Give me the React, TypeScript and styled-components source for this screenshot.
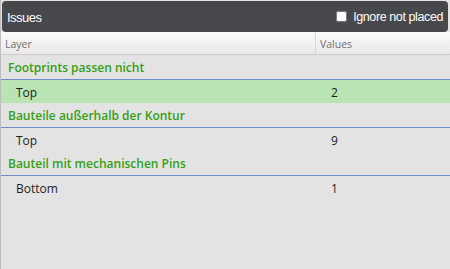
import React, { useState } from "react";
import styled, { createGlobalStyle } from "styled-components";

const GlobalStyle = createGlobalStyle`
  html, body {
    margin: 0;
    padding: 0;
    background: #e3e3e3;
  }
  #root {
    height: 269px;
  }
`;

const Panel = styled.div`
  height: 269px;
  box-sizing: border-box;
  background: #e3e3e3;
  border-left: 1px solid #bdbdbd;
  padding-top: 1px;
  display: flex;
  flex-direction: column;
`;

const TitleBar = styled.div`
  height: 31px;
  margin: 0 2px 0 1px;
  padding: 1px 5px 0 5px;
  box-sizing: border-box;
  background: #47484c;
  border-radius: 4px;
  display: flex;
  align-items: center;
  justify-content: space-between;
  font-family: "Liberation Sans", Arial, sans-serif;
  font-size: 13px;
  letter-spacing: -0.5px;
  color: #fff;
`;

const Title = styled.span``;

const CheckLabel = styled.label`
  display: flex;
  align-items: center;
  gap: 6px;
  font-size: 12.5px;
  letter-spacing: -0.4px;
  cursor: pointer;
`;

const Check = styled.input`
  width: 11px;
  height: 11px;
  margin: 0 0 1px 0;
  accent-color: #fff;
`;

const Table = styled.div`
  font-family: "Open Sans", sans-serif;
`;

const HeadRow = styled.div`
  height: 22px;
  display: grid;
  grid-template-columns: 314px 1fr;
  background: linear-gradient(#fafafa, #e9e9e9);
  border-bottom: 1px solid #d7c9c9;
`;

const HeadCell = styled.div<{ $sep?: boolean }>`
  display: flex;
  align-items: center;
  padding: 1px 0 0 4px;
  border-left: ${(p) => (p.$sep ? "1px solid #d9d9d9" : "none")};
  font-size: 10.5px;
  color: #6f6f6f;
`;

const GroupRow = styled.div`
  height: 25px;
  box-sizing: border-box;
  display: flex;
  align-items: center;
  padding: 1px 0 0 7px;
  border-bottom: 1px solid #6b8cc7;
  font-size: 12px;
  font-weight: 550;
  color: #33a015;
`;

const DataRow = styled.div<{ $selected?: boolean }>`
  height: 23px;
  box-sizing: border-box;
  padding-top: 1px;
  display: grid;
  grid-template-columns: 315px 1fr;
  align-items: center;
  background: ${(p) => (p.$selected ? "#b8e4b3" : "transparent")};
  font-size: 12px;
  color: #1e1e1e;
`;

const DataCell = styled.div`
  padding-left: 15px;
`;

const groups = [
  { name: "Footprints passen nicht", rows: [{ layer: "Top", value: 2 }] },
  { name: "Bauteile außerhalb der Kontur", rows: [{ layer: "Top", value: 9 }] },
  { name: "Bauteil mit mechanischen Pins", rows: [{ layer: "Bottom", value: 1 }] },
];

const App = () => {
  const [ignore, setIgnore] = useState(false);
  return (
    <>
      <GlobalStyle />
      <Panel>
        <TitleBar>
          <Title>Issues</Title>
          <CheckLabel>
            <Check type="checkbox" checked={ignore} onChange={() => setIgnore(!ignore)} />
            Ignore not placed
          </CheckLabel>
        </TitleBar>
        <Table>
          <HeadRow>
            <HeadCell>Layer</HeadCell>
            <HeadCell $sep>Values</HeadCell>
          </HeadRow>
          {groups.map((g, gi) => (
            <React.Fragment key={g.name}>
              <GroupRow>{g.name}</GroupRow>
              {g.rows.map((r, ri) => (
                <DataRow key={ri} $selected={gi === 0}>
                  <DataCell>{r.layer}</DataCell>
                  <DataCell>{r.value}</DataCell>
                </DataRow>
              ))}
            </React.Fragment>
          ))}
        </Table>
      </Panel>
    </>
  );
};

export default App;
